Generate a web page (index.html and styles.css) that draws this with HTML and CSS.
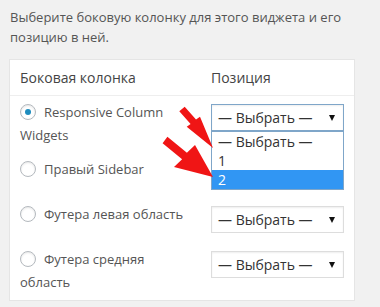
FILE: index.html
```html
<!DOCTYPE html>
<html lang="ru">
<head>
<meta charset="UTF-8">
<title>Виджет — боковая колонка</title>
<link rel="stylesheet" href="styles.css">
</head>
<body>
<p class="intro">Выберите боковую колонку для этого виджета и его позицию в ней.</p>
<div class="card">
<div class="row head">
<div class="col-name">Боковая колонка</div>
<div class="col-pos">Позиция</div>
</div>
<div class="row">
<div class="col-name"><span class="radio checked"></span>Responsive Column Widgets</div>
<div class="col-pos"><div class="select active">— Выбрать —<span class="caret"></span></div></div>
</div>
<div class="row">
<div class="col-name"><span class="radio"></span>Правый Sidebar</div>
<!-- this select sits under the open list -->
<div class="col-pos"><div class="select covered">— Выбрать —<span class="caret"></span></div></div>
</div>
<div class="row">
<div class="col-name"><span class="radio"></span>Футера левая область</div>
<div class="col-pos"><div class="select">— Выбрать —<span class="caret"></span></div></div>
</div>
<div class="row">
<div class="col-name"><span class="radio"></span>Футера средняя область</div>
<div class="col-pos"><div class="select">— Выбрать —<span class="caret"></span></div></div>
</div>
</div>
<!-- open list of the first select -->
<ul class="options">
<li>— Выбрать —</li>
<li>1</li>
<li class="hover">2</li>
</ul>
<svg class="arrows" width="380" height="307" viewBox="0 0 380 307">
<polygon fill="#f01515" points="179.3,111.2 184.7,106.8 196,119.5 200,116.7 213,148 186.7,126.7 190.6,123.9"/>
<polygon fill="#f01515" points="162.6,143.2 167.4,136.8 186.9,152.8 195,145 213,177 174,167 182.1,159.2"/>
</svg>
</body>
</html>
```
FILE: styles.css
```css
body {
font-family: 'Open Sans', 'Noto Sans', sans-serif;
font-size: 13px;
color: #555;
background-color: #f1f1f1;
margin: 0;
padding: 0;
position: relative;
overflow: hidden;
height: 307px;
}
.intro {
margin: 7px 0 0 10px;
width: 340px;
line-height: 20px;
}
.card {
margin: 12px 0 0 9px;
width: 344px;
background-color: #fff;
border: 1px solid #e5e5e5;
}
.row {
display: flex;
align-items: flex-start;
}
.head {
height: 35px;
align-items: center;
border-bottom: 1px solid #eee;
font-size: 14px;
color: #444;
}
.col-name {
width: 170px;
padding-left: 10px;
padding-right: 21px;
}
.col-pos {
flex: 1;
}
.row .col-name {
padding-top: 5px;
padding-bottom: 6px;
line-height: 23px;
}
.head .col-name {
padding-top: 0;
padding-bottom: 0;
}
.row .col-pos {
padding: 8px 0 10px 0;
}
.head .col-pos {
padding: 0;
}
.radio {
display: inline-block;
width: 14px;
height: 14px;
border: 1px solid #b4b9be;
border-radius: 50%;
vertical-align: -3px;
margin-right: 8px;
box-shadow: inset 0 1px 2px rgba(0, 0, 0, 0.1);
position: relative;
}
.radio.checked::after {
content: '';
position: absolute;
left: 4px;
top: 4px;
width: 6px;
height: 6px;
border-radius: 50%;
background-color: #1e8cbe;
}
.select {
width: 125px;
height: 25px;
border: 1px solid #ddd;
box-shadow: inset 0 1px 2px rgba(0, 0, 0, 0.07);
font-size: 14px;
line-height: 25px;
padding-left: 6px;
color: #333;
position: relative;
}
.select.active {
border-color: #7fa6c9;
}
.select.covered {
visibility: hidden;
}
.caret {
position: absolute;
right: 8px;
top: 10px;
border-left: 3px solid transparent;
border-right: 3px solid transparent;
border-top: 6px solid #111;
}
.options {
list-style-type: none;
margin: 0;
padding: 0;
position: absolute;
left: 211px;
top: 131px;
width: 131px;
border: 1px solid #7fa6c9;
background-color: #fff;
font-size: 14px;
color: #333;
}
.options li {
height: 19px;
line-height: 19px;
padding-left: 6px;
}
.options .hover {
background-color: #3196f3;
color: #fff;
}
.arrows {
position: absolute;
left: 0;
top: 0;
}
```
